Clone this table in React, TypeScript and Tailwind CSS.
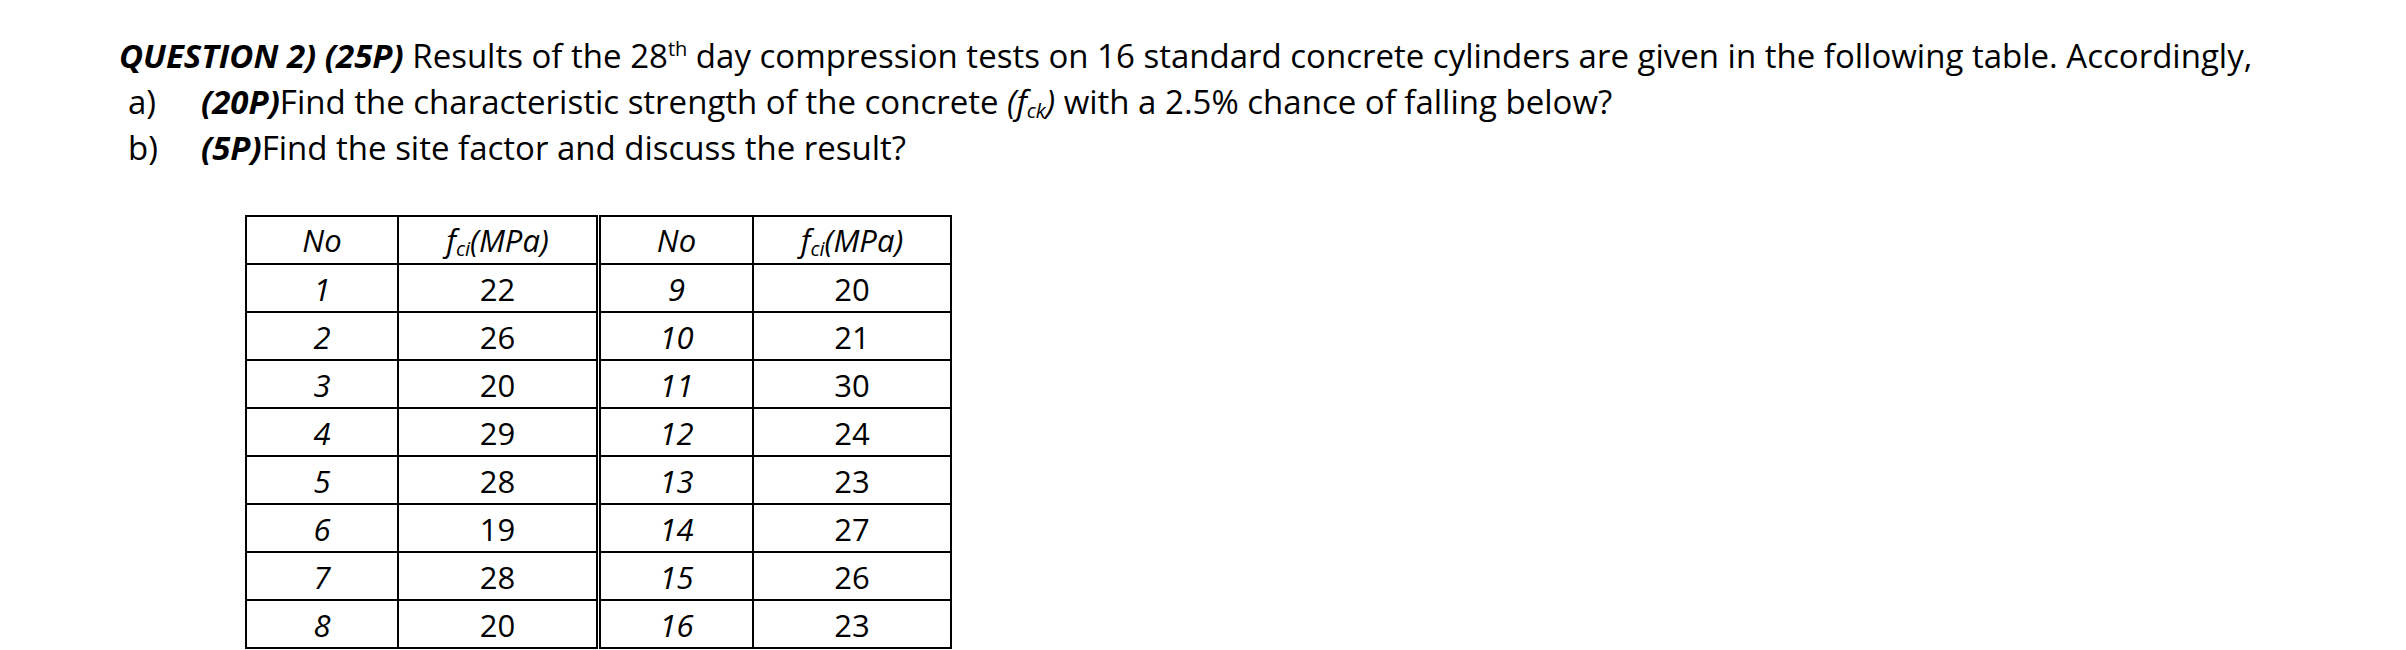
import React from "react";

const left: [string, string][] = [
  ["1", "22"],
  ["2", "26"],
  ["3", "20"],
  ["4", "29"],
  ["5", "28"],
  ["6", "19"],
  ["7", "28"],
  ["8", "20"],
];
const right: [string, string][] = [
  ["9", "20"],
  ["10", "21"],
  ["11", "30"],
  ["12", "24"],
  ["13", "23"],
  ["14", "27"],
  ["15", "26"],
  ["16", "23"],
];

function Fci() {
  return (
    <span className="italic">
      f<span className="text-[20px] leading-[0] relative top-[4px]">ci</span>(MPa)
    </span>
  );
}

function Half({ rows, first }: { rows: [string, string][]; first: boolean }) {
  return (
    <div
      className={
        "grid border-l-2 border-t-2 border-black " +
        (first ? "grid-cols-[152px_199px]" : "grid-cols-[153px_198px]")
      }
    >
      <div className="h-[48px] border-r-2 border-b-2 border-black flex items-center justify-center italic pt-[1px]">
        No
      </div>
      <div className="h-[48px] border-r-2 border-b-2 border-black flex items-center justify-center pt-[1px]">
        <Fci />
      </div>
      {rows.map(([n, v]) => (
        <React.Fragment key={n}>
          <div className="h-[48px] border-r-2 border-b-2 border-black flex items-center justify-center italic pt-[2px]">
            {n}
          </div>
          <div className="h-[48px] border-r-2 border-b-2 border-black flex items-center justify-center pt-[2px]">
            {v}
          </div>
        </React.Fragment>
      ))}
    </div>
  );
}

export default function App() {
  return (
    <div className="w-[2406px] h-[650px] bg-white text-black font-['Open_Sans','Noto_Sans',sans-serif] text-[33px] overflow-hidden">
      <div className="pl-[119px] pt-[33px] leading-[46px]">
        <p className="h-[46px] whitespace-nowrap">
          <b className="italic">QUESTION 2) (25P)</b> Results of the 28
          <span className="text-[20px] leading-[0] relative top-[-12px]">th</span> day compression tests on 16
          standard concrete cylinders are given in the following table. Accordingly,
        </p>
        <p className="h-[46px] flex whitespace-nowrap">
          <span className="pl-[9px] w-[82px]">a)</span>
          <span>
            <b className="italic">(20P)</b>Find the characteristic strength of the concrete{" "}
            <span className="italic">
              (f<span className="text-[20px] leading-[0] relative top-[4px]">ck</span>)
            </span>{" "}
            with a 2.5% chance of falling below?
          </span>
        </p>
        <p className="h-[46px] flex whitespace-nowrap">
          <span className="pl-[9px] w-[82px]">b)</span>
          <span>
            <b className="italic">(5P)</b>Find the site factor and discuss the result?
          </span>
        </p>
      </div>
      <div className="ml-[245px] mt-[44px] flex gap-[1px] leading-none text-[31px]">
        <Half rows={left} first={true} />
        <Half rows={right} first={false} />
      </div>
    </div>
  );
}
